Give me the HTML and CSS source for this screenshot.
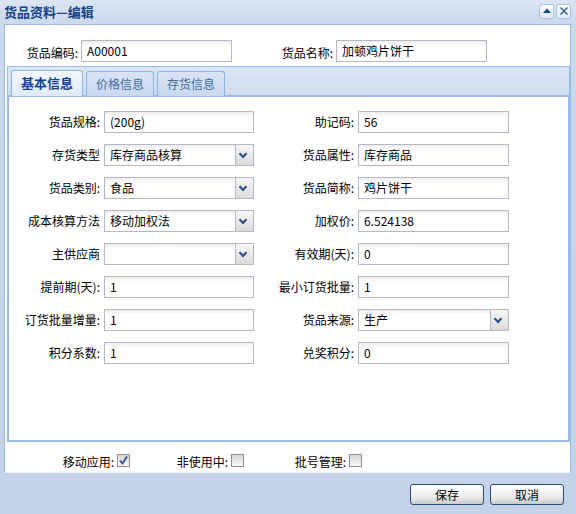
FILE: index.html
```html
<!DOCTYPE html>
<html>
<head>
<meta charset="utf-8">
<link rel="stylesheet" href="styles.css">
</head>
<body>
<div class="win">
  <div class="titlebar">
    <span class="title">货品资料—编辑</span>
    <span class="tools">
      <span class="tool"><svg width="12" height="12" viewBox="0 0 12 12"><path d="M2 8 L6 3.5 L10 8 Z" fill="#15428b"/></svg></span>
      <span class="tool"><svg width="12" height="12" viewBox="0 0 12 12"><path d="M2.5 2.5 L9.5 9.5 M9.5 2.5 L2.5 9.5" stroke="#3a62a0" stroke-width="1.5"/></svg></span>
    </span>
  </div>
  <div class="panel">
    <div class="toprow">
      <label class="lbl">货品编码:</label><div class="field">A00001</div>
      <label class="lbl">货品名称:</label><div class="field">加顿鸡片饼干</div>
    </div>
    <div class="tabpanel">
      <div class="tabstrip">
        <span class="tab active">基本信息</span>
        <span class="tab">价格信息</span>
        <span class="tab">存货信息</span>
      </div>
      <div class="tabbody">
        <div class="form">
          <label class="lbl">货品规格:</label><div class="field">(200g)</div>
          <label class="lbl">助记码:</label><div class="field">56</div>

          <label class="lbl">存货类型</label><div class="field combo"><span class="val">库存商品核算</span><span class="trig"></span></div>
          <label class="lbl">货品属性:</label><div class="field">库存商品</div>

          <label class="lbl">货品类别:</label><div class="field combo"><span class="val">食品</span><span class="trig"></span></div>
          <label class="lbl">货品简称:</label><div class="field">鸡片饼干</div>

          <label class="lbl">成本核算方法</label><div class="field combo"><span class="val">移动加权法</span><span class="trig"></span></div>
          <label class="lbl">加权价:</label><div class="field">6.524138</div>

          <label class="lbl">主供应商</label><div class="field combo"><span class="val"></span><span class="trig"></span></div>
          <label class="lbl">有效期(天):</label><div class="field">0</div>

          <label class="lbl">提前期(天):</label><div class="field">1</div>
          <label class="lbl">最小订货批量:</label><div class="field">1</div>

          <label class="lbl">订货批量增量:</label><div class="field">1</div>
          <label class="lbl">货品来源:</label><div class="field combo"><span class="val">生产</span><span class="trig"></span></div>

          <label class="lbl">积分系数:</label><div class="field">1</div>
          <label class="lbl">兑奖积分:</label><div class="field">0</div>
        </div>
      </div>
    </div>
    <div class="checkrow">
      <label class="lbl">移动应用:</label><span class="cb checked"><svg width="9" height="9" viewBox="0 0 9 9"><path d="M1 4.5 L3.5 7.5 L8 0.5" fill="none" stroke="#2d4f9a" stroke-width="1.8"/></svg></span>
      <label class="lbl">非使用中:</label><span class="cb"></span>
      <label class="lbl">批号管理:</label><span class="cb"></span>
    </div>
  </div>
  <div class="buttons">
    <button class="btn">保存</button>
    <button class="btn">取消</button>
  </div>
</div>
</body>
</html>
```

FILE: styles.css
```css
html, body {
  margin: 0;
  padding: 0;
}
body {
  width: 576px;
  height: 514px;
  overflow: hidden;
  font-family: "Noto Sans CJK SC", "DejaVu Sans", sans-serif;
  font-size: 12px;
  color: #000;
}
.win {
  width: 576px;
  height: 514px;
  background: linear-gradient(#dbe5f3 0px, #cbd9ec 24px, #c9d7ea 100px, #c3d2e6 514px);
  box-sizing: border-box;
}
.titlebar {
  height: 24px;
  display: flex;
  align-items: center;
  justify-content: space-between;
  padding: 0 5px 0 4px;
  box-sizing: border-box;
}
.title {
  font-weight: bold;
  font-size: 13px;
  color: #15428b;
  margin-top: -1px;
}
.tools {
  display: flex;
  gap: 2px;
  margin-top: -2px;
}
.tool {
  width: 13px;
  height: 13px;
  border: 1px solid #a9c2e2;
  border-radius: 2px;
  background: linear-gradient(#ffffff, #dde8f6);
  display: flex;
  align-items: center;
  justify-content: center;
}
.panel {
  margin-left: 4px;
  width: 567px;
  height: 449px;
  box-sizing: border-box;
  border: 1px solid #99bbe8;
  border-bottom-color: #eef3fa;
  background: #fff;
  display: flex;
  flex-direction: column;
}
.lbl {
  text-align: right;
  white-space: nowrap;
  align-self: center;
  line-height: 22px;
}
.field {
  height: 22px;
  box-sizing: border-box;
  border: 1px solid #b5b8c8;
  background: linear-gradient(#eeeeee 0px, #ffffff 5px);
  padding: 0 5px;
  line-height: 20px;
  white-space: nowrap;
  overflow: hidden;
}
.combo {
  display: flex;
  padding-right: 0;
}
.combo .val {
  flex: 1;
}
.trig {
  width: 17px;
  height: 20px;
  border-left: 1px solid #b5b8c8;
  background: linear-gradient(#f7f7f7, #dadada);
  position: relative;
}
.trig::after {
  content: "";
  position: absolute;
  left: 4px;
  top: 6px;
  width: 4px;
  height: 4px;
  border-right: 2px solid #2d4f8a;
  border-bottom: 2px solid #2d4f8a;
  transform: rotate(45deg);
}
.toprow {
  height: 41px;
  box-sizing: border-box;
  padding-top: 15px;
  display: grid;
  grid-template-columns: 73px 151px 98px 151px;
  column-gap: 3px;
  align-items: start;
}
.tabpanel {
  margin-left: 2px;
  width: 563px;
  height: 376px;
  display: flex;
  flex-direction: column;
}
.tabstrip {
  height: 31px;
  box-sizing: border-box;
  border: 1px solid #99bbe8;
  border-bottom: 2px solid #99bbe8;
  background: linear-gradient(#dae6f5, #cfdcee);
  display: flex;
  align-items: flex-end;
  padding-left: 3px;
  gap: 3px;
}
.tab {
  height: 25px;
  box-sizing: border-box;
  border: 1px solid #8db2e3;
  border-bottom: none;
  border-radius: 3px 3px 0 0;
  background: linear-gradient(#d8e4f4, #cad9ee);
  color: #416aa3;
  font-size: 12px;
  padding: 0 9px;
  line-height: 24px;
  margin-bottom: -1px;
}
.tab.active {
  background: linear-gradient(#f2f7fe, #dfeafa);
  color: #15428b;
  font-weight: bold;
  font-size: 13px;
  padding: 0 9px;
  height: 26px;
  border-color: #8db2e3;
}
.tabbody {
  flex: 1;
  border: 2px solid #99bbe8;
  border-top: none;
  background: #fff;
}
.form {
  padding-top: 14px;
  display: grid;
  grid-template-columns: 91px 150px 96px 151px;
  column-gap: 4px;
  row-gap: 11px;
  align-items: start;
}
.checkrow {
  display: grid;
  grid-template-columns: 109px 13px 95px 13px 99px 13px;
  column-gap: 3px;
  align-items: center;
  padding-top: 10px;
}
.checkrow .lbl {
  line-height: 20px;
}
.cb {
  width: 13px;
  height: 13px;
  box-sizing: border-box;
  border: 1px solid #8f8f8f;
  background: linear-gradient(#d8d8d8, #f8f8f8);
  display: flex;
  align-items: center;
  justify-content: center;
  margin-top: -4px;
}
.buttons {
  display: flex;
  justify-content: flex-end;
  gap: 6px;
  padding: 11px 12px 0 0;
}
.btn {
  width: 74px;
  height: 21px;
  border: 1px solid #2a4c76;
  border-radius: 3px;
  background: linear-gradient(#ffffff 0px, #f0f0f0 10px, #dedede 15px, #c9c9c9 19px);
  font-family: "Noto Sans CJK SC", sans-serif;
  font-size: 12px;
  color: #000;
  padding: 0;
  line-height: 19px;
}
```
